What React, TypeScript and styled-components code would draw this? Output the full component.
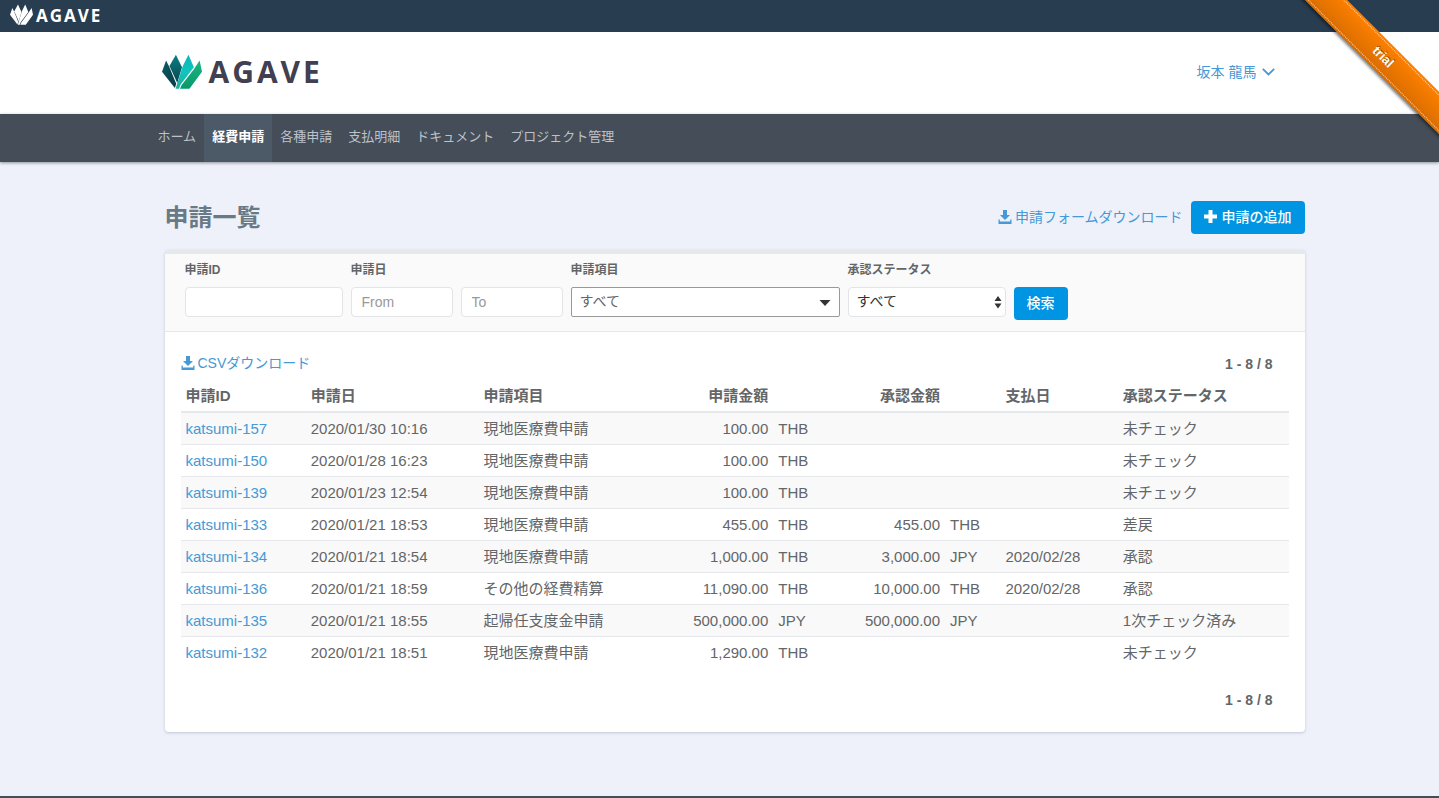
import React from "react";
import styled, { createGlobalStyle, css } from "styled-components";

const GlobalStyle = createGlobalStyle`
  *, *::before, *::after { box-sizing: border-box; }
  body {
    margin: 0;
    background: #eef1fa;
    color: #636668;
    font: 14px/20px "Liberation Sans", "Noto Sans CJK JP", sans-serif;
  }
  button, input, select { font-family: inherit; }
  a { color: #4599d6; text-decoration: none; }
`;

const Page = styled.div`
  display: flex;
  flex-direction: column;
  min-height: 100vh;
`;

const TopBar = styled.div`
  display: flex;
  align-items: center;
  height: 32px;
  padding: 0 10px;
  background: #283d50;
`;

const Header = styled.header`
  background: #fff;
`;

const Container = styled.div`
  max-width: 1170px;
  margin: 0 auto;
  padding: 0 15px;
`;

const HeaderRow = styled(Container)`
  display: flex;
  align-items: center;
  justify-content: space-between;
  height: 82px;
  padding-bottom: 2px;
`;

const Brand = styled.a<{ $small?: boolean }>`
  display: flex;
  align-items: flex-start;
  gap: ${(p) => (p.$small ? 3 : 7)}px;
  padding-left: ${(p) => (p.$small ? 0 : 12)}px;
  color: ${(p) => (p.$small ? "#fff" : "#423f50")};
  font: 700 ${(p) => (p.$small ? "17px/24px" : "30px/36px")} "Open Sans", sans-serif;
  letter-spacing: ${(p) => (p.$small ? 2 : 3)}px;
`;

const UserButton = styled.button`
  display: flex;
  align-items: center;
  gap: 5px;
  margin-right: 15px;
  padding: 0;
  border: 0;
  background: none;
  color: #4599d6;
  font-size: 14px;
  line-height: 20px;
  cursor: pointer;
`;

const NavBar = styled.nav`
  position: relative;
  background: #444d58;
  box-shadow: 0 1px 3px rgba(0, 0, 0, 0.4);
`;

const NavList = styled(Container).attrs({ as: "ul" })`
  display: flex;
  list-style: none;
`;

const NavLink = styled.a<{ $active?: boolean }>`
  display: block;
  padding: 13px 8px 15px;
  color: #bcc2cb;
  font-size: 13px;
  line-height: 20px;
  ${(p) =>
    p.$active &&
    css`
      background: #4c5a67;
      color: #fff;
      font-weight: 700;
    `}
`;

const Main = styled.main`
  flex: 1;
  width: 100%;
  max-width: 1170px;
  margin: 0 auto;
  padding: 39px 0 64px 30px;
`;

const TitleRow = styled.div`
  display: flex;
  align-items: center;
  justify-content: space-between;
  margin-bottom: 16px;
`;

const Title = styled.h1`
  margin: 0;
  color: #697a85;
  font-size: 24px;
  line-height: 32px;
  font-weight: 700;
`;

const Actions = styled.div`
  display: flex;
  align-items: center;
  gap: 8px;
`;

const IconLink = styled.a`
  display: inline-flex;
  align-items: center;
  gap: 3px;
  padding-bottom: 2px;
`;

const PrimaryButton = styled.button`
  display: flex;
  align-items: center;
  justify-content: center;
  gap: 5px;
  height: 33px;
  padding: 0 13px 2px;
  border: 0;
  border-radius: 4px;
  background: #0095e3;
  color: #fff;
  font-size: 14px;
  line-height: 20px;
  font-weight: 500;
  white-space: nowrap;
  cursor: pointer;
`;

const Panel = styled.section`
  border-top: 4px solid #e5e9ec;
  border-radius: 4px;
  background: #fff;
  box-shadow: 0 1px 3px rgba(60, 70, 90, 0.25);
`;

const FilterForm = styled.form`
  display: flex;
  align-items: flex-end;
  gap: 8px;
  padding: 6px 20px 11px;
  border-bottom: 1px solid #e5e7e9;
  background: #fafafa;
`;

const Field = styled.div<{ $width: number }>`
  flex: 0 1 ${(p) => p.$width}px;
  min-width: 0;
  padding-bottom: 3px;
`;

const Label = styled.label`
  display: block;
  margin-bottom: 7px;
  font-size: 12px;
  line-height: 20px;
  font-weight: 700;
`;

const control = css`
  display: block;
  width: 100%;
  height: 30px;
  border: 1px solid #e2e4e6;
  border-radius: 4px;
  background: #fff;
  font-size: 14px;
`;

const Pair = styled.div`
  display: flex;
  gap: 8px;
`;

const TextInput = styled.input`
  ${control}
  min-width: 0;
  padding: 0 10px;
  color: #555;
  &::placeholder { color: #999; opacity: 1; }
`;

const SelectBox = styled.div`
  position: relative;
`;

const Select = styled.select<{ $combo?: boolean }>`
  ${control}
  appearance: none;
  padding: 0 24px 2px 8px;
  color: #333;
  ${(p) =>
    p.$combo &&
    css`
      border-color: #999;
      border-radius: 2px;
      color: #636668;
    `}
`;

const Arrow = styled.svg<{ $right: number }>`
  position: absolute;
  top: 7px;
  right: ${(p) => p.$right}px;
  pointer-events: none;
`;

const PanelBody = styled.div`
  padding: 22px 16px;
`;

const ListBar = styled.div`
  display: flex;
  align-items: center;
  justify-content: space-between;
  height: 20px;
  padding-right: 16px;
`;

const Count = styled.p<{ $foot?: boolean }>`
  margin: ${(p) => (p.$foot ? "21px 16px 0 0" : "0")};
  text-align: right;
  font-weight: 700;
`;

const Table = styled.table`
  width: 100%;
  table-layout: fixed;
  border-collapse: collapse;
  font-size: 15px;
  line-height: 21px;
`;

const Col = styled.col<{ $share: number }>`
  width: ${(p) => p.$share}%;
`;

const Th = styled.th<{ $right?: boolean }>`
  height: 38px;
  padding: 5px;
  border-bottom: 2px solid #e5e9ec;
  text-align: ${(p) => (p.$right ? "right" : "left")};
  vertical-align: bottom;
  white-space: nowrap;
`;

const Row = styled.tr`
  & + & { border-top: 1px solid #e5e7ea; }
  &:nth-child(odd) { background: #f9f9f9; }
`;

const Td = styled.td<{ $right?: boolean }>`
  height: 32px;
  padding: 5px;
  text-align: ${(p) => (p.$right ? "right" : "left")};
  white-space: nowrap;
`;

const Footer = styled.footer`
  height: 2px;
  background: #444d58;
`;

const RibbonCorner = styled.div`
  position: absolute;
  top: 0;
  right: 0;
  z-index: 10;
  width: 157px;
  height: 157px;
  overflow: hidden;
  pointer-events: none;
`;

const Ribbon = styled.div`
  position: absolute;
  top: 42px;
  right: -44px;
  width: 200px;
  padding: 2px 0;
  transform: rotate(45deg);
  background: linear-gradient(to bottom, rgba(0, 0, 0, 0), rgba(0, 0, 0, 0.15)) #ff8000;
  box-shadow: 0 2px 3px rgba(0, 0, 0, 0.5);
`;

const RibbonText = styled.span`
  display: block;
  border: 1px dotted rgba(255, 255, 255, 0.7);
  border-width: 1px 0;
  color: #fff;
  font-size: 13px;
  line-height: 24px;
  font-weight: 700;
  text-align: center;
  text-shadow: 0 -1px rgba(0, 0, 0, 0.5);
`;

const LEAVES = [
  "M12 20 L0 54 L38 103 L42 90 L21 38 Z",
  "M41 2 L22 36 L45 88 L59 40 Z",
  "M78 2 L61 37 L40 105 L50 105 L55 92 L94 40 Z",
  "M111 20 L94 46 L58 94 L53 105 L81 105 L118 54 Z",
];

function LogoMark({ white, width, height }: { white?: boolean; width: number; height: number }) {
  return (
    <svg width={width} height={height} viewBox="0 0 118 106" preserveAspectRatio="none" aria-hidden="true">
      <defs>
        <linearGradient id="leaf0" x1="0" y1="0" x2="1" y2="1">
          <stop offset="0" stopColor="#0d5c63" />
          <stop offset="1" stopColor="#063a47" />
        </linearGradient>
        <linearGradient id="leaf1" x1="0" y1="0" x2="0" y2="1">
          <stop offset="0" stopColor="#0b7f83" />
          <stop offset="1" stopColor="#07474f" />
        </linearGradient>
        <linearGradient id="leaf2" x1="0" y1="0" x2="0" y2="1">
          <stop offset="0" stopColor="#0ab5bb" />
          <stop offset="0.5" stopColor="#12c4bd" />
          <stop offset="1" stopColor="#1fae9b" />
        </linearGradient>
        <linearGradient id="leaf3" x1="0" y1="0" x2="0" y2="1">
          <stop offset="0" stopColor="#1cb583" />
          <stop offset="1" stopColor="#07986a" />
        </linearGradient>
      </defs>
      {LEAVES.map((d, i) => (
        <path key={d} d={d} fill={white ? "#fff" : `url(#leaf${i})`} />
      ))}
    </svg>
  );
}

function DownloadIcon() {
  return (
    <svg width="14" height="14" viewBox="0 0 14 14" fill="currentColor" aria-hidden="true">
      <path d="M5 0h4v5h3L7 10 2 5h3zM.5 9.500h1.300v2h10.400v-2h1.300V14H.5z" />
    </svg>
  );
}

function PlusIcon() {
  return (
    <svg width="13" height="13" viewBox="0 0 13 13" fill="currentColor" aria-hidden="true">
      <path d="M4.500 0h4v4.500H13v4H8.500V13h-4V8.500H0v-4h4.500z" />
    </svg>
  );
}

const NAV = ["ホーム", "経費申請", "各種申請", "支払明細", "ドキュメント", "プロジェクト管理"];

// Column shares of the table, in percent.
const COLUMNS = [11.3, 15.6, 18.8, 7.8, 7.7, 7.8, 5, 10.6, 15.4];

type Item = [string, string, string, string, string, string, string, string, string];

const ITEMS: Item[] = [
  ["katsumi-157", "2020/01/30 10:16", "現地医療費申請", "100.00", "THB", "", "", "", "未チェック"],
  ["katsumi-150", "2020/01/28 16:23", "現地医療費申請", "100.00", "THB", "", "", "", "未チェック"],
  ["katsumi-139", "2020/01/23 12:54", "現地医療費申請", "100.00", "THB", "", "", "", "未チェック"],
  ["katsumi-133", "2020/01/21 18:53", "現地医療費申請", "455.00", "THB", "455.00", "THB", "", "差戻"],
  ["katsumi-134", "2020/01/21 18:54", "現地医療費申請", "1,000.00", "THB", "3,000.00", "JPY", "2020/02/28", "承認"],
  ["katsumi-136", "2020/01/21 18:59", "その他の経費精算", "11,090.00", "THB", "10,000.00", "THB", "2020/02/28", "承認"],
  ["katsumi-135", "2020/01/21 18:55", "起帰任支度金申請", "500,000.00", "JPY", "500,000.00", "JPY", "", "1次チェック済み"],
  ["katsumi-132", "2020/01/21 18:51", "現地医療費申請", "1,290.00", "THB", "", "", "", "未チェック"],
];

export default function App() {
  return (
    <Page lang="ja">
      <GlobalStyle />
      <RibbonCorner>
        <Ribbon>
          <RibbonText>trial</RibbonText>
        </Ribbon>
      </RibbonCorner>

      <TopBar>
        <Brand href="#" $small>
          <LogoMark white width={23} height={21} />
          AGAVE
        </Brand>
      </TopBar>

      <Header>
        <HeaderRow>
          <Brand href="#">
            <LogoMark width={40} height={35} />
            AGAVE
          </Brand>
          <UserButton type="button">
            坂本 龍馬
            <svg width="13" height="8" viewBox="0 0 13 8" fill="none" stroke="currentColor" strokeWidth="1.800" aria-hidden="true">
              <path d="M.8.8l5.700 5.700L12.200.8" />
            </svg>
          </UserButton>
        </HeaderRow>
      </Header>

      <NavBar>
        <NavList>
          {NAV.map((name, i) => (
            <li key={name}>
              <NavLink href="#" $active={i === 1}>
                {name}
              </NavLink>
            </li>
          ))}
        </NavList>
      </NavBar>

      <Main>
        <TitleRow>
          <Title>申請一覧</Title>
          <Actions>
            <IconLink href="#">
              <DownloadIcon />
              申請フォームダウンロード
            </IconLink>
            <PrimaryButton type="button">
              <PlusIcon />
              申請の追加
            </PrimaryButton>
          </Actions>
        </TitleRow>

        <Panel>
          <FilterForm onSubmit={(e) => e.preventDefault()}>
            <Field $width={158}>
              <Label htmlFor="request-id">申請ID</Label>
              <TextInput id="request-id" type="text" />
            </Field>
            <Field $width={212}>
              <Label htmlFor="date-from">申請日</Label>
              <Pair>
                <TextInput id="date-from" type="text" placeholder="From" />
                <TextInput type="text" placeholder="To" aria-label="申請日 To" />
              </Pair>
            </Field>
            <Field $width={269}>
              <Label htmlFor="item">申請項目</Label>
              <SelectBox>
                <Select id="item" $combo>
                  <option>すべて</option>
                </Select>
                <Arrow $right={9} width="12" height="16" viewBox="0 0 12 16" fill="#333" aria-hidden="true">
                  <path d="M.5 6h11L6 12z" />
                </Arrow>
              </SelectBox>
            </Field>
            <Field $width={158}>
              <Label htmlFor="status">承認ステータス</Label>
              <SelectBox>
                <Select id="status">
                  <option>すべて</option>
                </Select>
                <Arrow $right={4} width="8" height="16" viewBox="0 0 8 16" fill="#333" aria-hidden="true">
                  <path d="M.5 7L4 2l3.500 5zM.5 9.500h7L4 14.500z" />
                </Arrow>
              </SelectBox>
            </Field>
            <PrimaryButton type="submit">検索</PrimaryButton>
          </FilterForm>

          <PanelBody>
            <ListBar>
              <IconLink href="#">
                <DownloadIcon />
                CSVダウンロード
              </IconLink>
              <Count>1 - 8 / 8</Count>
            </ListBar>
            <Table>
              <colgroup>
                {COLUMNS.map((share, i) => (
                  <Col key={i} $share={share} />
                ))}
              </colgroup>
              <thead>
                <tr>
                  <Th>申請ID</Th>
                  <Th>申請日</Th>
                  <Th>申請項目</Th>
                  <Th $right>申請金額</Th>
                  <Th />
                  <Th $right>承認金額</Th>
                  <Th />
                  <Th>支払日</Th>
                  <Th>承認ステータス</Th>
                </tr>
              </thead>
              <tbody>
                {ITEMS.map(([id, ...cells]) => (
                  <Row key={id}>
                    <Td>
                      <a href="#">{id}</a>
                    </Td>
                    {cells.map((text, i) => (
                      <Td key={i} $right={i === 2 || i === 4}>
                        {text}
                      </Td>
                    ))}
                  </Row>
                ))}
              </tbody>
            </Table>
            <Count $foot>1 - 8 / 8</Count>
          </PanelBody>
        </Panel>
      </Main>
      <Footer />
    </Page>
  );
}
